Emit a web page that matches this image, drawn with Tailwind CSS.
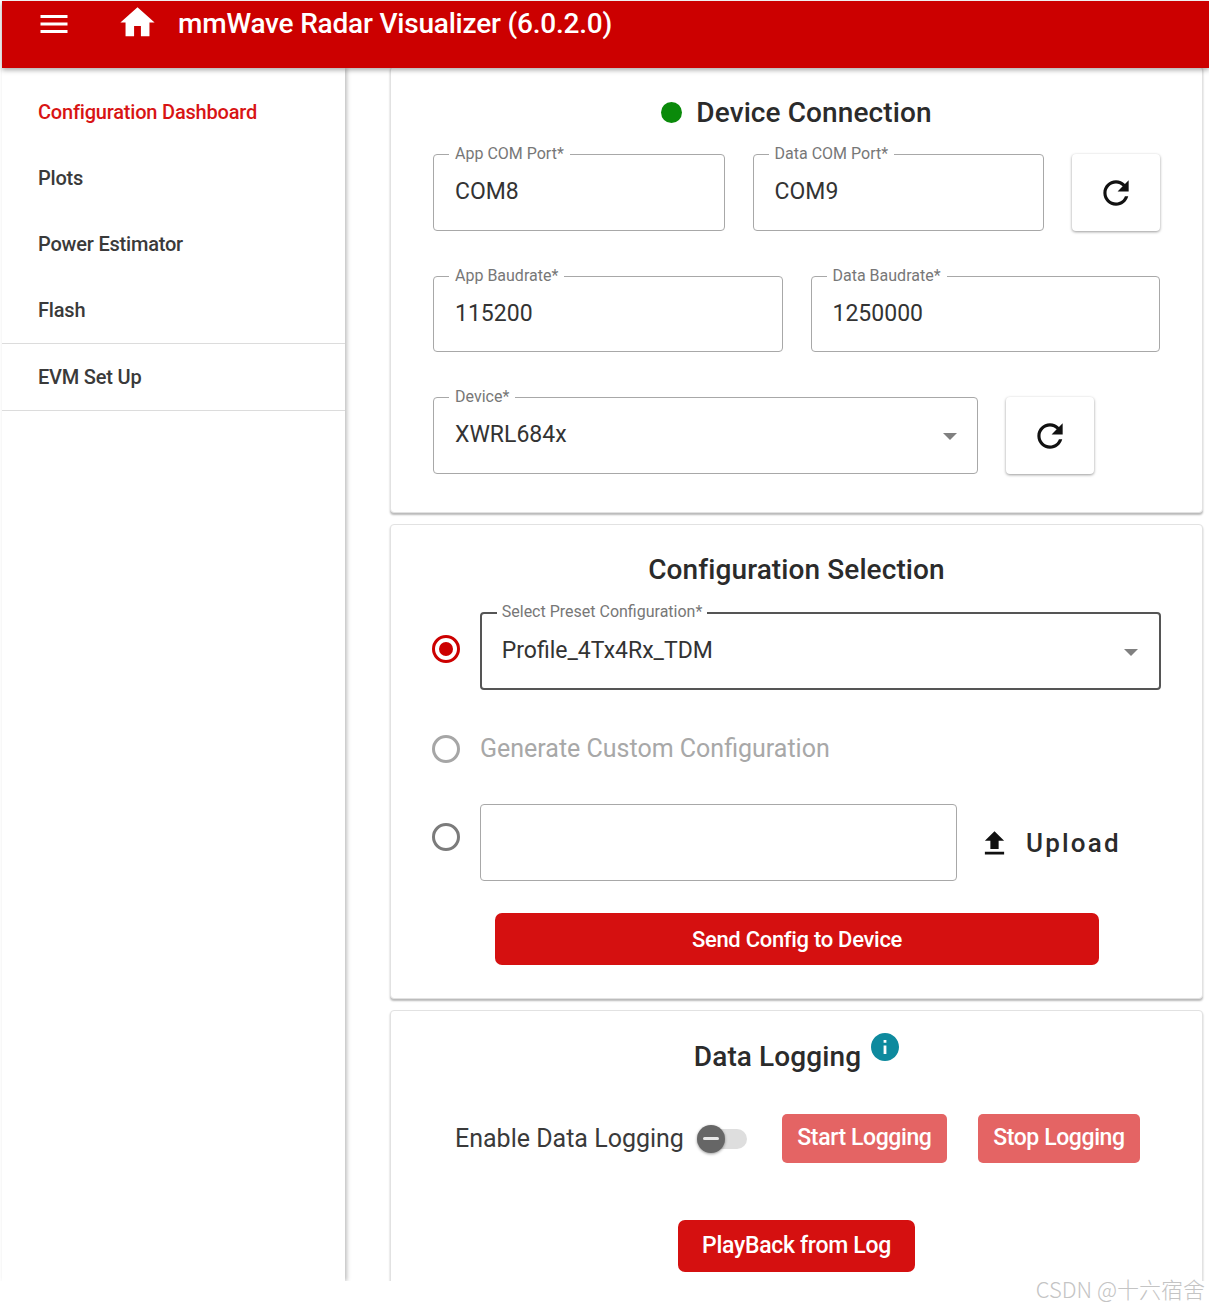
<!DOCTYPE html>
<html>
<head>
<meta charset="utf-8">
<script src="https://cdn.jsdelivr.net/npm/@tailwindcss/browser@4"></script>
</head>
<body class="bg-white">
<div class="relative h-[1305px] w-[1209px] overflow-hidden bg-white font-['Roboto',sans-serif] text-[#212121]">
  <header class="relative z-20 ml-[2px] mt-[1px] flex h-[67px] items-start bg-[#cc0000] text-white shadow-[0_2px_5px_rgba(0,0,0,0.35)]">
    <svg class="ml-[34px] mt-[5px] h-[36px] w-[36px]" viewBox="0 0 24 24" fill="currentColor"><path d="M3 18h18v-2H3v2zm0-5h18v-2H3v2zm0-7v2h18V6H3z"/></svg>
    <svg class="ml-[45px] mt-[1px] h-[41px] w-[41px]" viewBox="0 0 24 24" fill="currentColor"><path d="M10 20v-6h4v6h5v-8h3L12 3 2 12h3v8z"/></svg>
    <h1 class="ml-[20px] mt-[5px] text-[28px] font-medium leading-[36px] tracking-[-0.2px]">mmWave Radar Visualizer (6.0.2.0)</h1>
  </header>
  <div class="flex h-[1213px] overflow-hidden">
    <aside class="z-10 ml-[2px] h-full w-[343px] shrink-0 bg-white shadow-[2px_0_4px_rgba(0,0,0,0.25)]">
      <nav class="text-[20px] font-medium tracking-[-0.2px] text-[#3a3a3a]">
        <div class="flex h-[88px] items-center pl-[36px] pt-[0px] text-[#d81414]">Configuration Dashboard</div>
        <div class="flex h-[44px] items-center pl-[36px]">Plots</div>
        <div class="flex h-[88px] items-center pl-[36px]">Power Estimator</div>
        <div class="flex h-[44px] items-center pl-[36px]">Flash</div>
        <div class="mt-[11px] flex h-[68px] items-center border-y border-[#dcdcdc] pl-[36px]">EVM Set Up</div>
      </nav>
    </aside>
    <main class="ml-[45px] flex w-[813px] shrink-0 flex-col gap-[11px]">
      <section class="-mt-[2px] h-[447px] shrink-0 rounded-[4px] border border-[#e2e2e2] bg-white px-[42px] shadow-[0_2px_2px_rgba(0,0,0,0.28)]">
        <div class="flex h-[87px] items-center justify-center gap-[14px] pt-[4px] pr-[-2px]">
          <span class="h-[21px] w-[21px] rounded-full bg-[#0a8a0a]"></span>
          <h2 class="text-[28px] font-medium tracking-[0.1px] text-[#2b2b2b]">Device Connection</h2>
        </div>
        <div class="flex gap-[28px]">
          <div class="relative h-[77px] w-[292px] rounded-[4px] border border-[#a8a8a8]">
            <span class="absolute -top-[10px] left-[15px] bg-white px-[6px] text-[16px] leading-[18px] text-[#777]">App COM Port*</span>
            <p class="pl-[21px] pt-[23px] text-[23px] leading-[28px] text-[#333]">COM8</p>
          </div>
          <div class="relative h-[77px] w-[292px] rounded-[4px] border border-[#a8a8a8]">
            <span class="absolute -top-[10px] left-[15px] bg-white px-[6px] text-[16px] leading-[18px] text-[#777]">Data COM Port*</span>
            <p class="pl-[21px] pt-[23px] text-[23px] leading-[28px] text-[#333]">COM9</p>
          </div>
          <button class="flex h-[77px] w-[88px] items-center justify-center rounded-[4px] bg-white shadow-[0_1px_3px_rgba(0,0,0,0.4)]">
            <svg class="h-[38px] w-[38px]" viewBox="0 0 24 24" fill="#111"><path d="M17.65 6.35C16.2 4.9 14.21 4 12 4c-4.42 0-7.99 3.58-7.99 8s3.57 8 7.99 8c3.73 0 6.84-2.55 7.73-6h-2.08c-.82 2.33-3.04 4-5.65 4-3.31 0-6-2.69-6-6s2.69-6 6-6c1.66 0 3.14.69 4.22 1.78L13 11h7V4l-2.35 2.35z"/></svg>
          </button>
        </div>
        <div class="mt-[45px] flex gap-[28px]">
          <div class="relative h-[76px] w-[350px] rounded-[4px] border border-[#a8a8a8]">
            <span class="absolute -top-[10px] left-[15px] bg-white px-[6px] text-[16px] leading-[18px] text-[#777]">App Baudrate*</span>
            <p class="pl-[21px] pt-[23px] text-[23px] leading-[28px] text-[#333]">115200</p>
          </div>
          <div class="relative h-[76px] w-[350px] rounded-[4px] border border-[#a8a8a8]">
            <span class="absolute -top-[10px] left-[15px] bg-white px-[6px] text-[16px] leading-[18px] text-[#777]">Data Baudrate*</span>
            <p class="pl-[21px] pt-[23px] text-[23px] leading-[28px] text-[#333]">1250000</p>
          </div>
        </div>
        <div class="mt-[45px] flex gap-[28px]">
          <div class="relative flex h-[77px] w-[545px] items-start justify-between rounded-[4px] border border-[#a8a8a8]">
            <span class="absolute -top-[10px] left-[15px] bg-white px-[6px] text-[16px] leading-[18px] text-[#777]">Device*</span>
            <p class="pl-[21px] pt-[23px] text-[23px] leading-[28px] text-[#333]">XWRL684x</p>
            <span class="mr-[20px] mt-[35px] h-0 w-0 border-x-[7px] border-t-[7px] border-x-transparent border-t-[#808080]"></span>
          </div>
          <button class="flex h-[77px] w-[88px] items-center justify-center rounded-[4px] bg-white shadow-[0_1px_3px_rgba(0,0,0,0.4)]">
            <svg class="h-[38px] w-[38px]" viewBox="0 0 24 24" fill="#111"><path d="M17.65 6.35C16.2 4.9 14.21 4 12 4c-4.42 0-7.99 3.58-7.99 8s3.57 8 7.99 8c3.73 0 6.84-2.55 7.73-6h-2.08c-.82 2.33-3.04 4-5.65 4-3.31 0-6-2.69-6-6s2.69-6 6-6c1.66 0 3.14.69 4.22 1.78L13 11h7V4l-2.35 2.35z"/></svg>
          </button>
        </div>
      </section>
      <section class="h-[475px] shrink-0 rounded-[4px] border border-[#e2e2e2] bg-white px-[41px] shadow-[0_2px_2px_rgba(0,0,0,0.28)]">
        <h2 class="flex h-[87px] items-center justify-center pt-[2px] text-[28px] font-medium tracking-[0.1px] text-[#2b2b2b]">Configuration Selection</h2>
        <div class="flex items-center gap-[20px]">
          <span class="mt-[-4px] flex h-[28px] w-[28px] items-center justify-center rounded-full border-[3px] border-[#cc0000]"><span class="h-[14px] w-[14px] rounded-full bg-[#cc0000]"></span></span>
          <div class="relative flex h-[78px] w-[689px] items-start justify-between rounded-[4px] border-2 border-[#555]">
            <span class="absolute -top-[11px] left-[15px] bg-white px-[5px] text-[16px] leading-[18px] text-[#777]">Select Preset Configuration*</span>
            <p class="pl-[20px] pt-[23px] text-[23px] leading-[28px] text-[#333]">Profile_4Tx4Rx_TDM</p>
            <span class="mr-[21px] mt-[35px] h-0 w-0 border-x-[7px] border-t-[7px] border-x-transparent border-t-[#808080]"></span>
          </div>
        </div>
        <div class="mt-[44px] flex h-[29px] items-center gap-[20px]">
          <span class="h-[28px] w-[28px] rounded-full border-[3px] border-[#a6a6a6]"></span>
          <span class="text-[25px] leading-[29px] text-[#a8a8a8]">Generate Custom Configuration</span>
        </div>
        <div class="mt-[41px] flex items-start">
          <span class="mt-[19px] h-[28px] w-[28px] rounded-full border-[3px] border-[#7b7b7b]"></span>
          <div class="ml-[20px] h-[77px] w-[477px] rounded-[4px] border border-[#a8a8a8]"></div>
          <div class="ml-[21px] mt-[20px] flex items-center">
            <svg class="h-[33px] w-[33px]" viewBox="0 0 24 24" fill="#111"><path d="M9 16h6v-6h4l-7-7-7 7h4zm-4 2h14v2H5z"/></svg>
            <span class="ml-[15px] text-[26px] font-medium tracking-[2.2px] text-[#2b2b2b]">Upload</span>
          </div>
        </div>
        <button class="ml-[63px] mt-[32px] block h-[52px] w-[604px] rounded-[7px] bg-[#d51010] text-[22px] font-medium tracking-[-0.3px] text-white">Send Config to Device</button>
      </section>
      <section class="h-[400px] shrink-0 rounded-[4px] border border-[#e2e2e2] bg-white shadow-[0_2px_2px_rgba(0,0,0,0.28)]">
        <div class="flex h-[91px] items-start justify-center gap-[10px] pl-[0px]">
          <h2 class="pt-[28px] text-[28px] font-medium leading-[36px] tracking-[0.1px] text-[#2b2b2b]">Data Logging</h2>
          <svg class="mt-[22px] h-[28px] w-[28px]" viewBox="2 2 20 20" fill="#0e8a9e"><path d="M12 2C6.48 2 2 6.48 2 12s4.48 10 10 10 10-4.48 10-10S17.52 2 12 2zm1 15h-2v-6h2v6zm0-8h-2V7h2v2z"/></svg>
        </div>
        <div class="mt-[12px] flex h-[49px] items-center">
          <span class="ml-[64px] text-[25px] text-[#3a3a3a]">Enable Data Logging</span>
          <span class="relative ml-[13px] flex h-[28px] w-[50px] items-center">
            <span class="ml-[4px] h-[20px] w-[46px] rounded-full bg-[#dedede]"></span>
            <span class="absolute left-0 top-0 flex h-[28px] w-[28px] items-center justify-center rounded-full bg-[#666] shadow-[0_1px_3px_rgba(0,0,0,0.4)]"><span class="h-[3px] w-[16px] rounded-full bg-[#e8e8e8]"></span></span>
          </span>
          <button class="ml-[35px] h-[49px] w-[165px] rounded-[5px] bg-[#e46464] text-[23px] font-medium tracking-[-0.4px] text-white">Start Logging</button>
          <button class="ml-[31px] h-[49px] w-[162px] rounded-[5px] bg-[#e46464] text-[23px] font-medium tracking-[-0.4px] text-white">Stop Logging</button>
        </div>
        <button class="mx-auto mt-[57px] block h-[52px] w-[237px] rounded-[7px] bg-[#d51010] text-[23px] font-medium tracking-[-0.3px] text-white">PlayBack from Log</button>
      </section>
    </main>
  </div>
  <span class="absolute bottom-[3px] right-[4px] z-30 font-['Noto_Sans_CJK_SC',sans-serif] text-[22px] font-light leading-[28px] text-[#c4c4c4]">CSDN @十六宿舍</span>
</div>
</body>
</html>
